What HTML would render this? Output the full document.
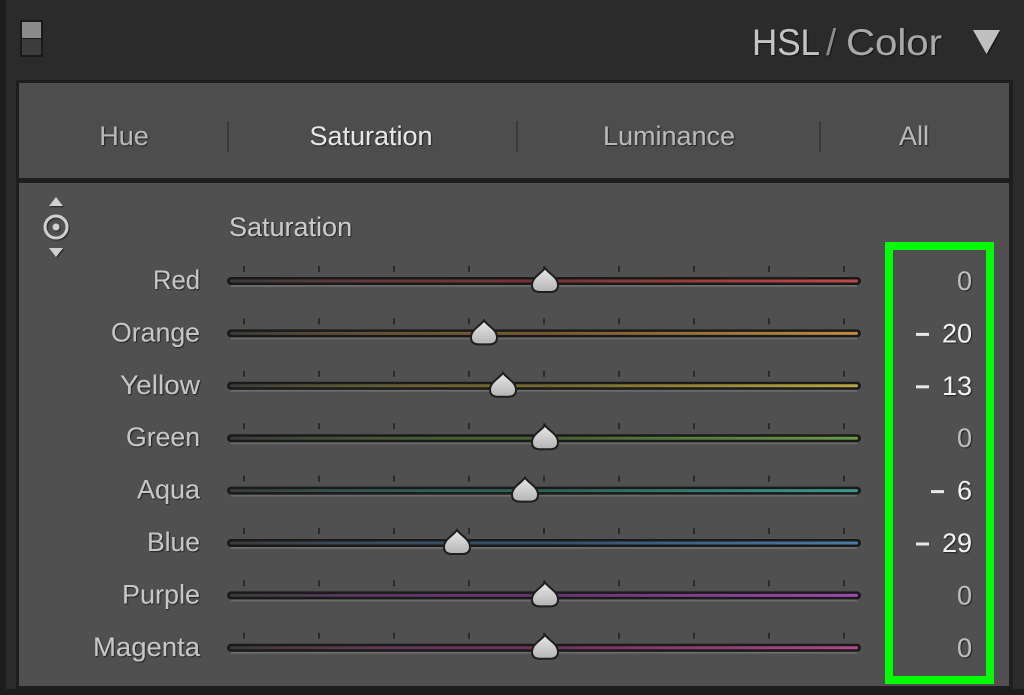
<!DOCTYPE html>
<html><head><meta charset="utf-8"><style>
html,body{margin:0;padding:0;background:#2b2b2b;overflow:hidden}
svg{display:block}
text{font-family:"Liberation Sans",sans-serif}
</style></head><body>
<svg width="1024" height="695" viewBox="0 0 1024 695" xmlns="http://www.w3.org/2000/svg">
<defs>
<linearGradient id="thumb" x1="0" y1="0" x2="0" y2="1"><stop offset="0" stop-color="#e8e8e8"/><stop offset="1" stop-color="#b4b4b4"/></linearGradient>
<filter id="sh"><feDropShadow dx="1" dy="1" stdDeviation="0.6" flood-color="#000" flood-opacity="0.6"/></filter>
</defs>
<rect width="1024" height="695" fill="#2b2b2b"/>
<rect x="0" y="0" width="6" height="695" fill="#1c1c1c"/>
<rect x="20" y="20" width="23" height="37" fill="#1a1a1a"/>
<rect x="22" y="22" width="19" height="16" fill="#8a8a8a"/>
<rect x="22" y="39" width="19" height="16" fill="#3c3c3c"/>
<g filter="url(#sh)">
<text x="752" y="55" font-size="37" fill="#c4c4c4" textLength="68" lengthAdjust="spacingAndGlyphs">HSL</text>
<text x="826" y="55" font-size="37" fill="#8a8a8a">/</text>
<text x="846" y="55" font-size="37" fill="#a8a8a8" textLength="96" lengthAdjust="spacingAndGlyphs">Color</text>
<polygon points="973,30 1000,30 986.5,54" fill="#c0c0c0"/>
</g>
<rect x="16" y="80" width="997" height="610" fill="#1e1e1e"/>
<rect x="19" y="83" width="990" height="95" fill="#4d4d4d"/>
<rect x="19" y="183" width="990" height="503" fill="#505050"/>
<g filter="url(#sh)" font-size="27">
<text x="124" y="145" fill="#b8b8b8" text-anchor="middle">Hue</text>
<text x="371" y="145" fill="#e6e6e6" text-anchor="middle">Saturation</text>
<text x="669" y="145" fill="#b8b8b8" text-anchor="middle">Luminance</text>
<text x="914" y="145" fill="#b8b8b8" text-anchor="middle">All</text>
</g>
<g stroke="#3a3a3a" stroke-width="2"><line x1="228" y1="121" x2="228" y2="152"/><line x1="517" y1="121" x2="517" y2="152"/><line x1="820" y1="121" x2="820" y2="152"/></g>
<g filter="url(#sh)">
<polygon points="49,206 63,206 56,197" fill="#cfcfcf"/>
<circle cx="56" cy="227" r="11" fill="none" stroke="#cfcfcf" stroke-width="3"/>
<circle cx="56" cy="227" r="3.5" fill="#cfcfcf"/>
<polygon points="49,248 63,248 56,257" fill="#cfcfcf"/>
<text x="229" y="236" font-size="27" fill="#cacaca">Saturation</text>
</g>
<g id="rows" font-size="26"></g>
<rect x="889" y="246" width="101" height="434" fill="none" stroke="#00ff00" stroke-width="8"/>
<rect x="0" y="689" width="1024" height="6" fill="#1c1c1c"/>
</svg>
<script>
var rows=[["Red","","0",545,"#c04848",47],["Orange","–","20",484,"#c08a40",89],["Yellow","–","13",503,"#b8a640",80],["Green","","0",545,"#6a9a44",74],["Aqua","–","6",525,"#3a9a8c",63],["Blue","–","29",457,"#4a7aa8",53],["Purple","","0",545,"#a048b0",78],["Magenta","","0",545,"#b04888",107]];
var g=document.getElementById('rows'),h="";
rows.forEach(function(r,i){
 var y=281+i*52.4;
 var ticks="";for(var k=0;k<9;k++){var x=244+k*75;ticks+='<line x1="'+x+'" y1="'+(y-15)+'" x2="'+x+'" y2="'+(y-9)+'" stroke="#2a2a2a" stroke-width="2"/>';}
 h+=ticks;
 h+='<line x1="231" y1="'+(y+5)+'" x2="857" y2="'+(y+5)+'" stroke="#6a6a6a" stroke-width="2"/>';
 h+='<rect x="227" y="'+(y-4)+'" width="634" height="8" rx="4" fill="#1a1a1a"/>';
 h+='<linearGradient id="g'+i+'" x1="0" x2="1"><stop offset="0" stop-color="#3a3a3a"/><stop offset="0.5" stop-color="'+r[4]+'" stop-opacity="0.55"/><stop offset="1" stop-color="'+r[4]+'"/></linearGradient>';
 h+='<rect x="230" y="'+(y-1.5)+'" width="628" height="3" rx="1.5" fill="url(#g'+i+')"/>';
 var c=r[3];
 h+='<path d="M'+c+' '+(y-13)+' C'+(c+3)+' '+(y-8)+' '+(c+13)+' '+(y-4)+' '+(c+13)+' '+(y+4)+' Q'+(c+13)+' '+(y+11)+' '+(c+5)+' '+(y+11)+' L'+(c-5)+' '+(y+11)+' Q'+(c-13)+' '+(y+11)+' '+(c-13)+' '+(y+4)+' C'+(c-13)+' '+(y-4)+' '+(c-3)+' '+(y-8)+' '+c+' '+(y-13)+'Z" fill="url(#thumb)" stroke="#1e1e1e" stroke-width="2"/>';
 h+='<text x="'+(200-r[5])+'" y="'+(y+8)+'" fill="#c6c6c6" filter="url(#sh)" font-size="27" textLength="'+r[5]+'" lengthAdjust="spacingAndGlyphs">'+r[0]+'</text>';
 var neg=r[1]!="";
 h+='<text x="972" y="'+(y+9)+'" text-anchor="end" fill="'+(neg?"#f0f0f0":"#bdbdbd")+'" font-size="27" filter="url(#sh)">'+r[2]+'</text>';
 if(neg){var w=r[2].length*15;h+='<rect x="'+(972-w-26)+'" y="'+(y-0.5)+'" width="13" height="3" fill="#e8e8e8"/>';}
});
g.innerHTML=h;
</script>
</body></html>
